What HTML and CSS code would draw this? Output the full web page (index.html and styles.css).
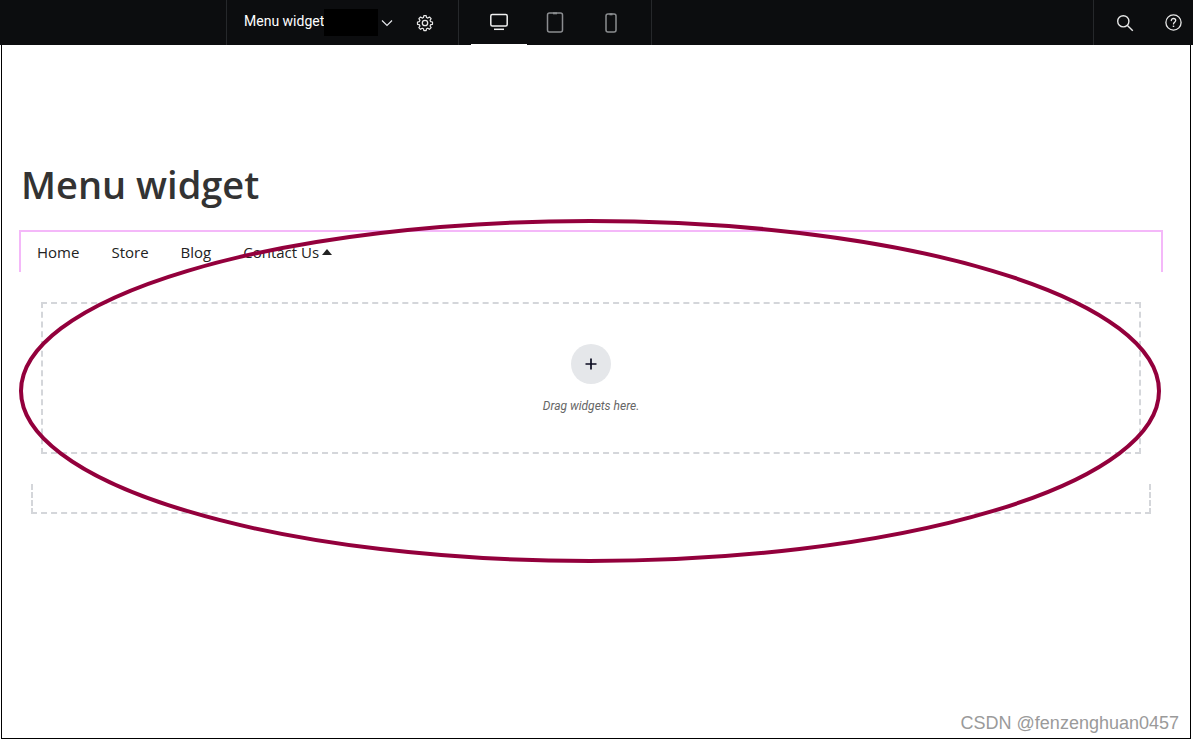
FILE: index.html
```html
<!DOCTYPE html>
<html lang="en">
<head>
<meta charset="utf-8">
<title>Menu widget</title>
<link rel="stylesheet" href="styles.css">
</head>
<body>
<header class="topbar">
  <div class="topbar-left"></div>
  <div class="page-select">
    <span class="page-name">Menu widget</span>
    <span class="redacted"></span>
    <svg class="chevron" width="12" height="8" viewBox="0 0 12 8" fill="none" stroke="#e5e7eb" stroke-width="1.2"><path d="M1 1.5l5 5 5-5"/></svg>
    <svg class="gear" width="18" height="18" viewBox="0 0 24 24" fill="none" stroke="#e8e8e8" stroke-width="1.7" stroke-linejoin="round"><path d="M10.3 2.5h3.4l.5 2.8 1.9.8 2.4-1.6 2.4 2.4-1.6 2.4.8 1.9 2.8.5v3.4l-2.8.5-.8 1.9 1.6 2.4-2.4 2.4-2.4-1.6-1.9.8-.5 2.8h-3.4l-.5-2.8-1.9-.8-2.4 1.6-2.4-2.4 1.6-2.4-.8-1.9-2.8-.5v-3.4l2.8-.5.8-1.9-1.6-2.4 2.4-2.4 2.4 1.6 1.9-.8z" transform="translate(12 12) scale(.92) translate(-12 -13.2)"/><circle cx="12" cy="12" r="3.6"/></svg>
  </div>
  <nav class="devices">
    <div class="device device-active">
      <svg width="20" height="18" viewBox="0 0 20 18" fill="none" stroke="#f0f0f0" stroke-width="1.5"><rect x="1.8" y="1.5" width="16.4" height="11.5" rx="1.5"/><path d="M5 16.3h10"/></svg>
    </div>
    <div class="device">
      <svg width="18" height="21" viewBox="0 0 18 21" fill="none" stroke="#8b8d90" stroke-width="1.5"><rect x="1.5" y="1" width="15" height="19" rx="2"/><path d="M7 1.3h4" stroke-width="2"/></svg>
    </div>
    <div class="device">
      <svg width="12" height="20" viewBox="0 0 12 20" fill="none" stroke="#8b8d90" stroke-width="1.5"><rect x="1" y="1" width="10" height="18" rx="2"/><path d="M4.5 1.3h3" stroke-width="2"/></svg>
    </div>
  </nav>
  <div class="topbar-right">
    <svg width="18" height="18" viewBox="0 0 18 18" fill="none" stroke="#e8e8e8" stroke-width="1.4"><circle cx="7.3" cy="7.3" r="5.6"/><path d="M11.4 11.4l5.4 5.4"/></svg>
    <svg width="17" height="17" viewBox="0 0 17 17" fill="none" stroke="#e8e8e8" stroke-width="1.3"><circle cx="8.5" cy="8.5" r="7.6"/><path d="M6.3 6.6c0-1.3 1-2.1 2.2-2.1s2.2.8 2.2 2c0 1.6-2.2 1.7-2.2 3.4" stroke-linecap="round"/><path d="M8.5 11.6v1.4" stroke-width="1.5"/></svg>
  </div>
</header>
<main class="canvas">
  <h1 class="title">Menu widget</h1>
  <section class="menu-widget">
    <ul class="menu">
      <li>Home</li>
      <li>Store</li>
      <li>Blog</li>
      <li class="has-caret">Contact Us<span class="caret"></span></li>
    </ul>
  </section>
  <section class="dropzone">
    <div class="add-button">
      <svg width="12" height="12" viewBox="0 0 12 12" stroke="#0b0b20" stroke-width="1.7"><path d="M6 .5v11M.5 6h11"/></svg>
    </div>
    <p class="drop-text">Drag widgets here.</p>
  </section>
  <section class="outer-drop"></section>
</main>
<svg class="annotation" width="1193" height="742" viewBox="0 0 1193 742" fill="none"><ellipse cx="590" cy="391" rx="569" ry="170" stroke="#93003c" stroke-width="4"/></svg>
<div class="watermark">CSDN @fenzenghuan0457</div>
</body>
</html>
```

FILE: styles.css
```css
* { box-sizing: border-box; }
html, body { margin: 0; padding: 0; background: #fff; }
body { height: 742px; overflow: hidden; font-family: "Open Sans", sans-serif; }

.topbar { display: flex; height: 45px; background: #0c0d0f; color: #fff; }
.topbar-left { width: 227px; border-right: 1px solid #26282b; }
.page-select { display: flex; align-items: center; width: 232px; padding-left: 17px; border-right: 1px solid #26282b; }
.page-name { font: 14px/20px Roboto, sans-serif; color: #fff; margin-top: -3px; }
.redacted { width: 54px; height: 27px; background: #000; margin-bottom: 0; }
.chevron { margin-left: 3px; }
.gear { margin-left: 23px; margin-right: 0; }

.devices { display: flex; width: 193px; padding-left: 12px; border-right: 1px solid #26282b; }
.device { display: flex; align-items: center; justify-content: center; width: 56px; height: 45px; }
.device-active { border-bottom: 1px solid #fff; }
.topbar-right { display: flex; align-items: center; gap: 31px; margin-left: auto; width: 100px; padding-left: 22px; border-left: 1px solid #26282b; }

.canvas { margin-left: 1px; width: 1190px; height: 694px; padding-top: 114px; border: 1px solid #000; border-top: 0; }
.title { margin: 0 0 0 19px; font: 600 38px/50px "Open Sans", sans-serif; color: #333; }
.menu-widget { height: 42px; margin: 21px 28px 0 17px; width: 1144px; border: 2px solid #f4b8f9; border-bottom: 0; }
.menu { display: flex; gap: 32px; margin: 0; padding: 10px 16px 0; list-style: none; font: 15px/21px "Open Sans", sans-serif; color: #222; }
.has-caret { display: flex; align-items: center; }
.caret { width: 0; height: 0; margin: -2px 0 0 3px; border: 5px solid transparent; border-top: 0; border-bottom: 6px solid #222; }

.dropzone { display: flex; flex-direction: column; align-items: center; width: 1100px; height: 152px; margin: 30px 0 0 39px; padding-top: 40px; border: 2px dashed #d4d6da; }
.add-button { display: flex; align-items: center; justify-content: center; width: 40px; height: 40px; border-radius: 50%; background: #e5e7ea; }
.drop-text { margin: 14px 0 0; font: italic 12px/16px Roboto, sans-serif; color: #666; }

.outer-drop { width: 1120px; height: 30px; margin: 30px 0 0 29px; border: 2px dashed #d4d6da; border-top: 0; }

.annotation { position: absolute; left: 0; top: 0; pointer-events: none; }
.watermark { position: absolute; right: 14px; top: 711px; font: 18px/24px "Liberation Sans", sans-serif; color: #9a9a9a; }
```
